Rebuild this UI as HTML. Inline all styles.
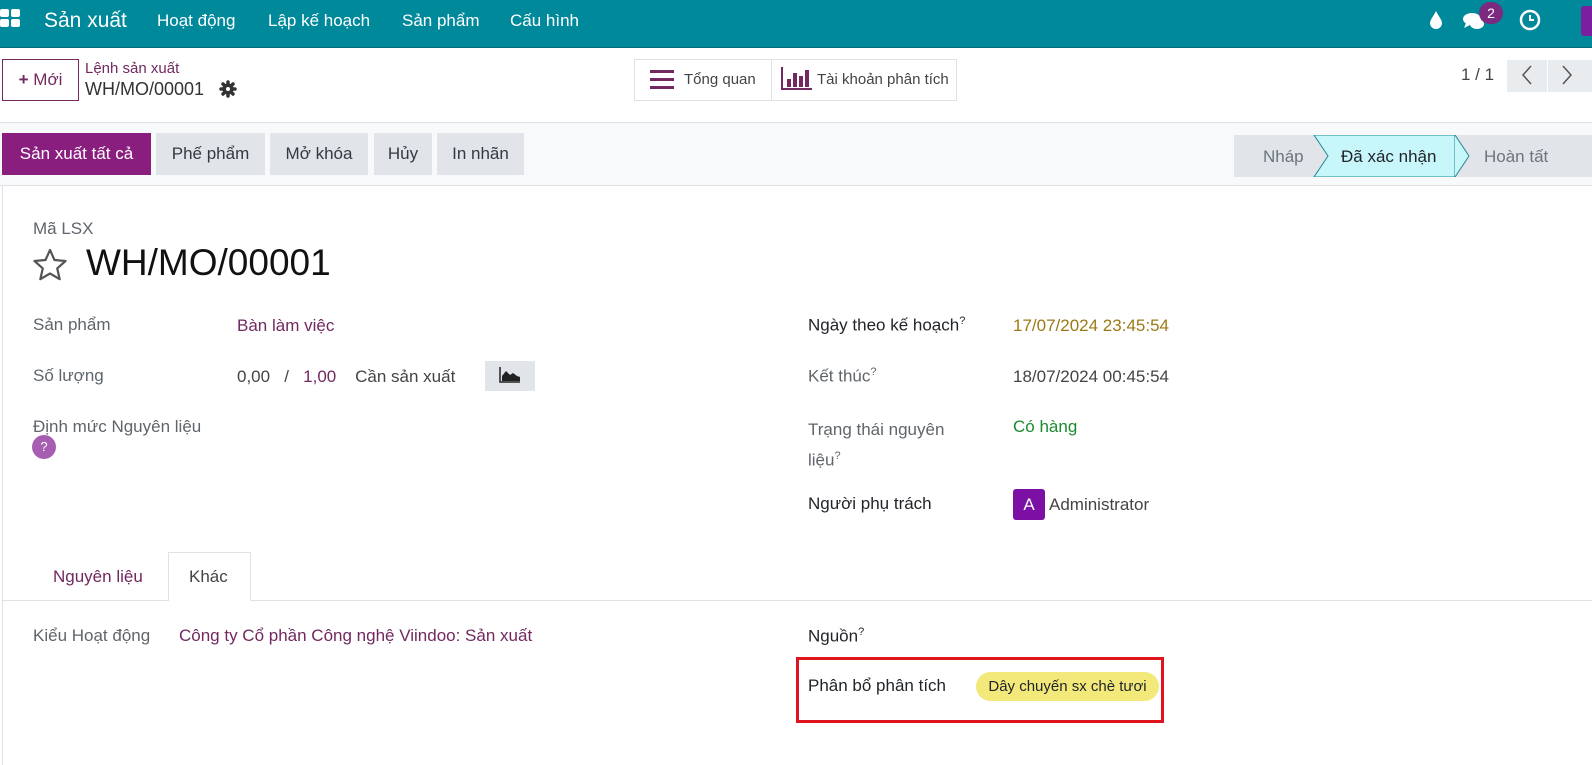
<!DOCTYPE html>
<html><head><meta charset="utf-8"><style>
*{box-sizing:border-box;margin:0;padding:0}
body{width:1592px;height:765px;overflow:hidden;font-family:"Liberation Sans",sans-serif;color:#212529;background:#fff;position:relative;font-size:16px}
.a{position:absolute;white-space:nowrap}
.top{position:absolute;left:0;top:0;width:1592px;height:48px;background:#00899a;border-bottom:1px solid #066e7a}
.top .a{color:#fff}
.btn{position:absolute;background:#e1e4e8;color:#343a40;font-size:17px;text-align:center;line-height:42px;height:42px;top:133px}
.lbl{color:#5f656b}
.pur{color:#71295f}
sup{font-size:11px}
</style></head><body>
<div class="top">
 <svg class="a" style="left:0;top:9px" width="22" height="22"><rect x="0" y="0" width="9" height="8" rx="2" fill="#fff"/><rect x="11" y="0" width="9" height="8" rx="2" fill="#fff"/><rect x="0" y="10" width="9" height="8" rx="2" fill="#fff"/><rect x="11" y="10" width="9" height="8" rx="2" fill="#fff"/></svg>
 <div class="a" style="left:44px;top:9px;font-size:21px">Sản xuất</div>
 <div class="a" style="left:157px;top:11px;font-size:17px">Hoạt động</div>
 <div class="a" style="left:268px;top:11px;font-size:17px">Lập kế hoạch</div>
 <div class="a" style="left:402px;top:11px;font-size:17px">Sản phẩm</div>
 <div class="a" style="left:510px;top:11px;font-size:17px">Cấu hình</div>
 <svg class="a" style="left:1428px;top:10px" width="16" height="20"><path d="M8 1C5 7 2 10 2 13a6 6 0 0 0 12 0C14 10 11 7 8 1z" fill="#fff"/></svg>
 <svg class="a" style="left:1462px;top:11px" width="26" height="22"><ellipse cx="10" cy="8" rx="9" ry="6" fill="#fff"/><path d="M4 12l-2 5 6-3z" fill="#fff"/><ellipse cx="15" cy="13" rx="7" ry="5" fill="#fff"/></svg>
 <div class="a" style="left:1479px;top:2px;width:24px;height:22px;border-radius:11px;background:#7b2a80;color:#fff;font-size:14px;text-align:center;line-height:22px">2</div>
 <svg class="a" style="left:1519px;top:9px" width="22" height="22"><circle cx="11" cy="11" r="9" fill="none" stroke="#fff" stroke-width="2.5"/><path d="M11 6v5h4" fill="none" stroke="#fff" stroke-width="2"/></svg>
 <div class="a" style="left:1581px;top:6px;width:20px;height:30px;background:#7c1ea0;border-radius:3px"></div>
</div>
<div class="a" style="left:2px;top:59px;width:77px;height:42px;border:1px solid #71295f;color:#71295f;font-size:17px;line-height:40px;text-align:center"><b>+</b> Mới</div>
<div class="a pur" style="left:85px;top:60px;font-size:15px">Lệnh sản xuất</div>
<div class="a" style="left:85px;top:79px;font-size:18px;color:#333">WH/MO/00001</div>
<svg class="a" style="left:219px;top:80px" width="18" height="18"><g stroke="#333" stroke-width="3.5" stroke-linecap="round"><path d="M9 2v14M2 9h14M4 4l10 10M14 4L4 14"/></g><circle cx="9" cy="9" r="5.5" fill="#333"/><circle cx="9" cy="9" r="2" fill="#fff"/></svg>
<div class="a" style="left:634px;top:59px;width:323px;height:42px;border:1px solid #dee2e6"></div>
<div class="a" style="left:771px;top:59px;width:1px;height:42px;background:#dee2e6"></div>
<svg class="a" style="left:650px;top:70px" width="24" height="20"><rect y="0" width="24" height="3" fill="#71295f"/><rect y="8" width="24" height="3" fill="#71295f"/><rect y="16" width="24" height="3" fill="#71295f"/></svg>
<div class="a" style="left:684px;top:71px;font-size:15px;color:#444">Tổng quan</div>
<svg class="a" style="left:781px;top:67px" width="32" height="24"><path d="M1 0v22h30" fill="none" stroke="#71295f" stroke-width="2"/><rect x="6" y="12" width="4" height="8" fill="#71295f"/><rect x="12" y="6" width="4" height="14" fill="#71295f"/><rect x="18" y="9" width="4" height="11" fill="#71295f"/><rect x="24" y="3" width="4" height="17" fill="#71295f"/></svg>
<div class="a" style="left:817px;top:71px;font-size:15px;color:#444">Tài khoản phân tích</div>
<div class="a" style="left:1461px;top:65px;font-size:17px;color:#444">1 / 1</div>
<div class="a" style="left:1507px;top:60px;width:40px;height:32px;background:#e9ecef"></div>
<div class="a" style="left:1548px;top:60px;width:44px;height:32px;background:#e9ecef"></div>
<svg class="a" style="left:1520px;top:64px" width="14" height="22"><path d="M11 2L3 11l8 9" fill="none" stroke="#555" stroke-width="1.5"/></svg>
<svg class="a" style="left:1560px;top:64px" width="14" height="22"><path d="M3 2l8 9-8 9" fill="none" stroke="#555" stroke-width="1.5"/></svg>
<div class="a" style="left:0;top:122px;width:1592px;height:64px;background:#f8f9fa;border-top:1px solid #dee2e6;border-bottom:1px solid #dee2e6"></div>
<div class="btn" style="left:2px;width:149px;background:#8a1e7f;color:#fff">Sản xuất tất cả</div>
<div class="btn" style="left:156px;width:109px">Phế phẩm</div>
<div class="btn" style="left:270px;width:98px">Mở khóa</div>
<div class="btn" style="left:374px;width:58px">Hủy</div>
<div class="btn" style="left:437px;width:87px">In nhãn</div>
<svg class="a" style="left:1234px;top:135px" width="358" height="42">
<rect x="0" y="0" width="358" height="42" fill="#e1e4e8"/>
<path d="M80 0H221V42H80L94 21z" fill="#c8f7fb" stroke="#1f8a94" stroke-width="1"/>
<path d="M221 0l14 21-14 21" fill="#c8f7fb" stroke="#1f8a94" stroke-width="1"/>
<text x="29" y="27" font-size="17" fill="#6c757d" font-family="Liberation Sans">Nháp</text>
<text x="107" y="27" font-size="17" fill="#212529" font-family="Liberation Sans">Đã xác nhận</text>
<text x="250" y="27" font-size="17" fill="#6c757d" font-family="Liberation Sans">Hoàn tất</text>
</svg>
<div class="a" style="left:2px;top:186px;width:1px;height:579px;background:#dee2e6"></div>
<div class="a lbl" style="left:33px;top:219px;font-size:17px">Mã LSX</div>
<svg class="a" style="left:32px;top:248px" width="36" height="34"><path d="M18 2l4.5 10 11 1-8.3 7.4 2.5 10.8L18 25.5 8.3 31.2l2.5-10.8L2.5 13l11-1z" fill="none" stroke="#555" stroke-width="2.2" stroke-linejoin="round"/></svg>
<div class="a" style="left:86px;top:242px;font-size:37px;color:#111">WH/MO/00001</div>
<div class="a lbl" style="left:33px;top:315px;font-size:17px">Sản phẩm</div>
<div class="a pur" style="left:237px;top:316px;font-size:17px">Bàn làm việc</div>
<div class="a lbl" style="left:33px;top:366px;font-size:17px">Số lượng</div>
<div class="a" style="left:237px;top:367px;font-size:17px;color:#444">0,00 &nbsp; / &nbsp; <span class="pur">1,00</span> &nbsp;&nbsp; Cần sản xuất</div>
<div class="a" style="left:485px;top:361px;width:50px;height:30px;background:#e1e4e8"></div>
<svg class="a" style="left:499px;top:367px" width="22" height="16"><path d="M1 0v15h20" fill="none" stroke="#222" stroke-width="1.5"/><path d="M3 14V9l4-5 4 4 3-2 4 3 3 1v4z" fill="#222"/></svg>
<div class="a lbl" style="left:33px;top:417px;font-size:17px">Định mức Nguyên liệu</div>
<div class="a" style="left:32px;top:435px;width:24px;height:24px;border-radius:12px;background:#a65fb0;color:#fff;font-size:13px;text-align:center;line-height:24px">?</div>
<div class="a" style="left:808px;top:315px;font-size:17px">Ngày theo kế hoạch<sup>?</sup></div>
<div class="a" style="left:1013px;top:316px;font-size:17px;color:#9b7a16">17/07/2024 23:45:54</div>
<div class="a lbl" style="left:808px;top:366px;font-size:17px">Kết thúc<sup>?</sup></div>
<div class="a" style="left:1013px;top:367px;font-size:17px;color:#444">18/07/2024 00:45:54</div>
<div class="a lbl" style="left:808px;top:417px;font-size:17px;line-height:26px">Trạng thái nguyên<br>liệu<sup>?</sup></div>
<div class="a" style="left:1013px;top:417px;font-size:17px;color:#1b8a2f">Có hàng</div>
<div class="a" style="left:808px;top:494px;font-size:17px">Người phụ trách</div>
<div class="a" style="left:1013px;top:489px;width:32px;height:31px;background:#7c0fa4;border-radius:3px;color:#fff;text-align:center;line-height:31px;font-size:17px">A</div>
<div class="a" style="left:1049px;top:495px;font-size:17px;color:#444">Administrator</div>
<div class="a" style="left:3px;top:600px;width:1589px;height:1px;background:#dee2e6"></div>
<div class="a pur" style="left:53px;top:567px;font-size:17px">Nguyên liệu</div>
<div class="a" style="left:168px;top:552px;width:83px;height:49px;border:1px solid #dee2e6;border-bottom:none;background:#fff"></div>
<div class="a" style="left:189px;top:567px;font-size:17px;color:#444">Khác</div>
<div class="a lbl" style="left:33px;top:626px;font-size:17px">Kiểu Hoạt động</div>
<div class="a pur" style="left:179px;top:626px;font-size:17px">Công ty Cổ phần Công nghệ Viindoo: Sản xuất</div>
<div class="a" style="left:808px;top:626px;font-size:17px">Nguồn<sup>?</sup></div>
<div class="a" style="left:796px;top:657px;width:368px;height:66px;border:3px solid #e0141e"></div>
<div class="a" style="left:808px;top:676px;font-size:17px">Phân bổ phân tích</div>
<div class="a" style="left:976px;top:672px;width:183px;height:29px;background:#f3e97a;border-radius:15px;font-size:15px;line-height:29px;text-align:center">Dây chuyến sx chè tươi</div>
</body></html>
